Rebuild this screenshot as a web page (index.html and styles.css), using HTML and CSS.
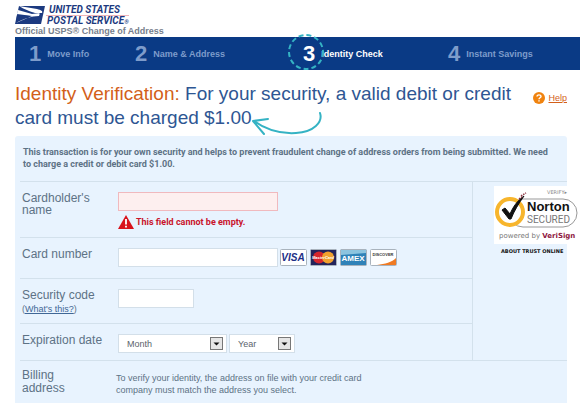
FILE: index.html
```html
<!DOCTYPE html>
<html lang="en">
	<head>
		<meta charset="UTF-8">
		<title>Official USPS Change of Address</title>
		<link rel="stylesheet" href="styles.css">
	</head>
	<body>
	  <div class="header">
	    <div class="logo">
	      <svg class="eagle" width="31" height="20" viewBox="0 0 31 20">
	        <path d="M4 1H30L26 19H0Z" fill="#1c3a80"/>
	        <path d="M4 1L22 4C26 5 28 6 27 8H20C17 7 8 4 4 1Z" fill="#fff"/>
	        <path d="M3 5L17 9L25 8L24 11C16 11 8 14 1 18L17 11L2 9Z" fill="#fff"/>
	        <path d="M2 10L15 11L1 17Z" fill="#1c3a80"/>
	        <path d="M24 8H27L26 10Z" fill="#1c3a80"/>
	      </svg>
	      <div class="logo-name">
	        <span class="logo-top">UNITED STATES</span>
	        <span class="logo-bottom">POSTAL SERVICE<small>®</small></span>
	      </div>
	    </div>
	    <div class="tagline">Official USPS® Change of Address</div>
	  </div>
	  <ol class="steps">
	    <li><b>1</b> <span>Move Info</span></li>
	    <li><b>2</b> <span>Name &amp; Address</span></li>
	    <li class="current">
	      <b>3</b> <span>Identity Check</span>
	      <svg class="ring" width="40" height="40" viewBox="0 0 40 40">
	        <circle cx="20" cy="20" r="17" fill="none" stroke="#35b3c4" stroke-width="2" stroke-dasharray="5 3"/>
	      </svg>
	    </li>
	    <li><b>4</b> <span>Instant Savings</span></li>
	  </ol>
	  <div class="heading">
	    <h1><span class="orange">Identity Verification:</span> For your security, a valid debit or credit card must be charged <span class="price">$1.00<svg class="arrow" width="74" height="28" viewBox="0 0 74 28"><path d="M68 3C71 12 62 22 44 23C28 24 13 19 2 11M16 9L1 11L12 24" fill="none" stroke="#35b3c4" stroke-width="2" stroke-linecap="round" stroke-linejoin="round"/></svg></span></h1>
	    <div class="help">
	      <svg width="12" height="12" viewBox="0 0 12 12">
	        <circle cx="6" cy="6" r="6" fill="#f0830f"/>
	        <path d="M4 4.600C4 2.300 8 2.300 8 4.500C8 5.800 6 5.800 6 7.200M6 8.300V9.500" fill="none" stroke="#fff" stroke-width="1.400"/>
	      </svg>
	      <a href="#">Help</a>
	    </div>
	  </div>
	  <form class="panel">
	    <p class="notice">This transaction is for your own security and helps to prevent fraudulent change of address orders from being submitted. We need to charge a credit or debit card $1.00.</p>
	    <div class="main">
	      <div class="fields">
	        <div class="row row-name">
	          <label class="name" for="holder">Cardholder's name</label>
	          <div>
	            <input class="box error" id="holder" type="text">
	            <div class="message">
	              <svg width="16" height="14" viewBox="0 0 16 14">
	                <path d="M8 0L16 14H0Z" fill="#d8121b"/>
	                <path d="M8 4V9.500M8 10.800V12.500" stroke="#fff" stroke-width="1.800"/>
	              </svg>
	              This field cannot be empty.
	            </div>
	          </div>
	        </div>
	        <div class="row row-card">
	          <label class="name" for="number">Card number</label>
	          <div class="line">
	            <input class="box" id="number" type="text">
	            <div class="cards">
	              <svg width="27" height="17" viewBox="0 0 27 17">
	                <rect x=".5" y=".5" width="26" height="16" rx="1" fill="#fff" stroke="#a9b3bd"/>
	                <text x="13" y="12" text-anchor="middle" font-size="10" font-weight="bold" font-style="italic" fill="#1d2f86">VISA</text>
	              </svg>
	              <svg width="27" height="17" viewBox="0 0 27 17">
	                <rect x=".5" y=".5" width="26" height="16" rx="1" fill="#23245c" stroke="#a9b3bd"/>
	                <circle cx="9" cy="8.500" r="6" fill="#d5262d"/>
	                <circle cx="18" cy="8.500" r="6" fill="#f2a12e"/>
	                <text x="13" y="10" text-anchor="middle" font-size="4" font-weight="bold" font-style="italic" fill="#fff">MasterCard</text>
	              </svg>
	              <svg width="27" height="17" viewBox="0 0 27 17">
	                <rect x=".5" y=".5" width="26" height="16" rx="1" fill="#2f82b8" stroke="#a9b3bd"/>
	                <path d="M1 1H26V4L1 6Z" fill="#8cc4df"/>
	                <text x="13" y="12" text-anchor="middle" font-size="8" font-weight="bold" fill="#fff">AMEX</text>
	              </svg>
	              <svg width="27" height="17" viewBox="0 0 27 17">
	                <rect x=".5" y=".5" width="26" height="16" rx="1" fill="#fff" stroke="#a9b3bd"/>
	                <path d="M26 9V16H7C15 15 22 13 26 9Z" fill="#f07a22"/>
	                <text x="13" y="7" text-anchor="middle" font-size="4" font-weight="bold" fill="#333">DISCOVER</text>
	              </svg>
	            </div>
	          </div>
	        </div>
	        <div class="row row-code">
	          <div class="name">
	            <label for="code">Security code</label>
	            <div class="what">(<a href="#">What's this?</a>)</div>
	          </div>
	          <input class="box short" id="code" type="text">
	        </div>
	        <div class="row row-date">
	          <label class="name" for="month">Expiration date</label>
	          <div class="line">
	            <div class="select month">
	              <select id="month"><option>Month</option></select>
	              <svg width="13" height="13" viewBox="0 0 13 13"><rect x=".5" y=".5" width="12" height="12" fill="#e6e6e6" stroke="#777"/><path d="M3.500 5.500H9.500L6.500 8.500Z" fill="#111"/></svg>
	            </div>
	            <div class="select year">
	              <select id="year" aria-label="Expiration year"><option>Year</option></select>
	              <svg width="13" height="13" viewBox="0 0 13 13"><rect x=".5" y=".5" width="12" height="12" fill="#e6e6e6" stroke="#777"/><path d="M3.500 5.500H9.500L6.500 8.500Z" fill="#111"/></svg>
	            </div>
	          </div>
	        </div>
	      </div>
	      <div class="trust">
	        <svg class="norton" width="86" height="58" viewBox="0 0 86 58">
	          <rect width="86" height="58" fill="#fff"/>
	          <rect x="15" y="13" width="68" height="28" rx="14" fill="#fff" stroke="#999"/>
	          <circle cx="16" cy="26" r="13" fill="#fff" stroke="#f7b52c" stroke-width="4"/>
	          <path d="M8 24L11 22L16 28C19 21 23 15 30 10C25 17 20 25 17 33H15Z" fill="#111" stroke="#111"/>
	          <path d="M25 13L29 10M27 10L32 7" stroke="#8d3440" stroke-width="1.500" stroke-dasharray="1.500 1"/>
	          <text class="wide" x="53" y="8" font-size="5" fill="#888">VERIFY▸</text>
	          <text x="33" y="25" font-size="13" font-weight="bold" fill="#111">Norton</text>
	          <text class="sans" x="33" y="37" font-size="10" fill="#777">SECURED</text>
	          <text class="wide" x="5" y="52" font-size="7" fill="#777">powered by <tspan font-weight="bold" fill="#8e1640">VeriSign</tspan></text>
	        </svg>
	        <a class="about" href="#">ABOUT TRUST ONLINE</a>
	      </div>
	    </div>
	    <div class="row row-billing">
	      <div class="name">Billing address</div>
	      <p>To verify your identity, the address on file with your credit card company must match the address you select.</p>
	    </div>
	  </form>
	</body>
</html>
```
FILE: styles.css
```css
html,body{
  padding: 0;
  margin: 0;
  overflow: hidden;
}
body {
  background-color: #fff;
  color: #5d7285;
  font-family: "Liberation Sans", Arial, sans-serif;
  font-size: 9px;
}
.header {
  padding: 5px 15px 0;
}
.logo {
  display: flex;
  height: 20px;
  color: #1c3a80;
  font-family: Roboto, sans-serif;
  font-weight: bold;
  font-style: italic;
}
.logo-name {
  display: flex;
  flex-direction: column;
}
.logo-top, .logo-bottom {
  font-size: 10px;
  line-height: 10px;
  white-space: nowrap;
}
.logo-top {
  padding-left: 3px;
  border-bottom: solid 1px #efb4b8;
}
.logo-bottom {
  padding-left: 1px;
}
.logo-bottom small {
  font-size: 6px;
}
.tagline {
  font-size: 9px;
  font-weight: bold;
  line-height: 12px;
  color: #77808c;
}
.steps {
  display: grid;
  grid-template-columns: 106fr 168fr 145fr 132fr;
  margin: 0 0 0 15px;
  padding: 0 0 0 14px;
  list-style: none;
  background-color: #0a3a85;
  color: #7e9ccb;
  font-weight: bold;
}
.steps li {
  position: relative;
  display: flex;
  align-items: center;
  gap: 6px;
  height: 33px;
}
.steps b {
  font-size: 22px;
}
.steps .current {
  color: #fff;
}
.ring {
  position: absolute;
  top: -5px;
  left: -17px;
}
.heading {
  display: flex;
  justify-content: space-between;
  padding: 12px 13px 0 15px;
}
.heading h1 {
  width: 500px;
  margin: 0;
  font-size: 19px;
  font-weight: normal;
  line-height: 24px;
  color: #2e5693;
}
.orange {
  color: #d35f1a;
}
.price {
  position: relative;
}
.arrow {
  position: absolute;
  top: 3px;
  left: 100%;
}
.help {
  display: flex;
  align-items: center;
  gap: 3px;
  height: 32px;
}
.help a {
  font-size: 9px;
  color: #d35f1a;
}
.panel {
  margin: 6px 13px 0 15px;
  min-height: 280px;
  background-color: #e8f3fe;
  border-radius: 3px 3px 0 0;
}
.notice {
  margin: 0;
  padding: 10px 14px 11px 8px;
  font-family: Roboto, sans-serif;
  font-weight: bold;
  line-height: 12px;
}
.main {
  display: flex;
  margin-left: 5px;
  border-top: solid 1px #d3e1ec;
  border-bottom: solid 1px #d3e1ec;
}
.fields {
  flex-grow: 1;
  border-right: solid 1px #d3e1ec;
}
.row {
  display: grid;
  grid-template-columns: 96px 1fr;
  align-items: start;
  box-sizing: border-box;
  padding: 10px 0 0 2px;
}
.fields .row + .row {
  border-top: solid 1px #d3e1ec;
}
.name {
  font-size: 12px;
  line-height: 12px;
}
.row-name {
  min-height: 55px;
}
.row-card {
  min-height: 41px;
}
.row-code {
  min-height: 45px;
}
.row-date {
  min-height: 37px;
}
.box {
  display: block;
  box-sizing: border-box;
  width: 160px;
  height: 19px;
  padding: 0 4px;
  border: solid 1px #d3dfe9;
  background-color: #fff;
}
.short {
  width: 76px;
}
.error {
  border-color: #f0b9be;
  background-color: #fdefef;
}
.message {
  display: flex;
  align-items: center;
  gap: 2px;
  padding-top: 4px;
  color: #c8152c;
  font-family: Roboto, sans-serif;
  font-weight: bold;
}
.line {
  display: flex;
  gap: 2px;
}
.cards {
  display: flex;
  align-items: center;
  gap: 3px;
}
.what {
  font-size: 9px;
  line-height: 16px;
}
.what a {
  color: #3f6796;
}
.select {
  position: relative;
}
.select select {
  appearance: none;
  width: 100%;
  height: 19px;
  padding: 0 8px;
  border: solid 1px #d3dfe9;
  border-radius: 0;
  background-color: #fff;
  color: #5c646c;
  font-family: inherit;
  font-size: 9px;
}
.select svg {
  position: absolute;
  top: 3px;
  right: 4px;
  pointer-events: none;
}
.month {
  width: 109px;
}
.year {
  width: 66px;
}
.trust {
  flex-shrink: 0;
  width: 73px;
  padding: 4px 0 0 21px;
}
.norton {
  display: block;
  width: 86px;
}
.wide {
  font-family: "DejaVu Sans", Verdana, sans-serif;
}
.sans {
  font-family: Roboto, sans-serif;
}
.about {
  display: block;
  padding: 4px 0 0 7px;
  color: #111;
  font-family: "DejaVu Sans", Verdana, sans-serif;
  font-size: 5px;
  font-weight: bold;
  text-decoration: none;
  white-space: nowrap;
}
.row-billing {
  grid-template-columns: 94px 1fr;
  padding: 8px 0 0 7px;
}
.row-billing .name {
  width: 60px;
  line-height: 13px;
}
.row-billing p {
  width: 250px;
  margin: 0;
  padding-top: 3px;
  line-height: 12px;
}
```
